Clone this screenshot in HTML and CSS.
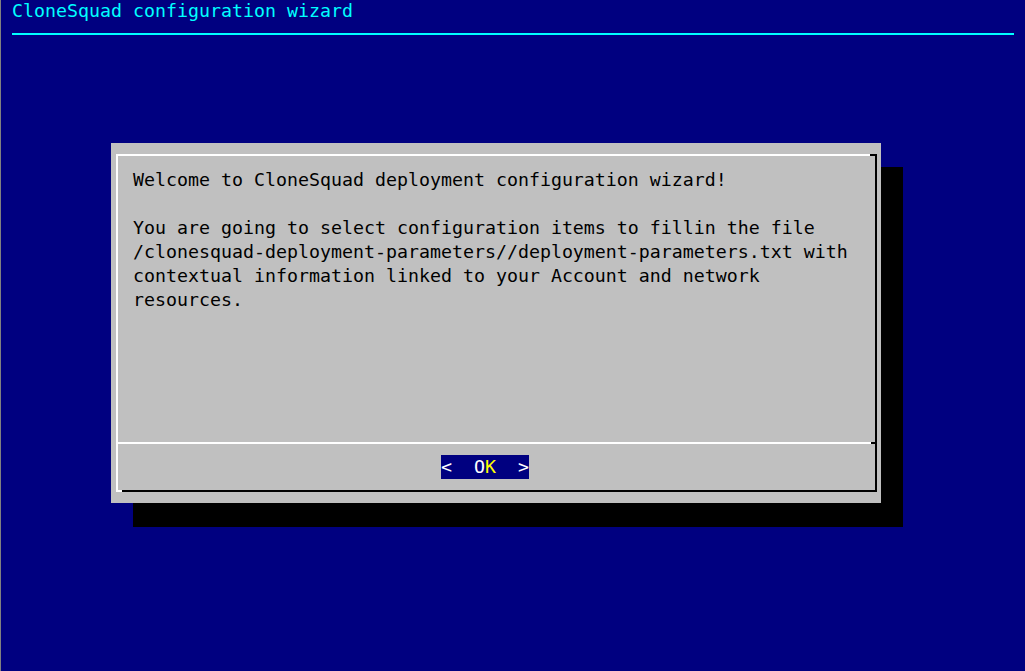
FILE: index.html
```html
<!DOCTYPE html>
<html lang="en">
<head>
<meta charset="utf-8">
<title>CloneSquad configuration wizard</title>
<link rel="stylesheet" href="styles.css">
</head>
<body>
<div class="screen">
  <header class="backtitle">CloneSquad configuration wizard</header>
  <div class="rule"></div>
  <section class="dialog">
    <div class="frame">
      <div class="message">Welcome to CloneSquad deployment configuration wizard!

You are going to select configuration items to fillin the file
/clonesquad-deployment-parameters//deployment-parameters.txt with
contextual information linked to your Account and network
resources.</div>
      <div class="buttons">
        <span class="btn">&lt;  O<span class="hot">K</span>  &gt;</span>
      </div>
    </div>
  </section>
</div>
</body>
</html>
```
FILE: styles.css
```css
html, body {
  margin: 0;
  padding: 0;
  background: #000080;
}

.screen {
  width: 1024px;
  height: 671px;
  background: #000080;
  border-left: 1px solid #808080;
  overflow: hidden;
  font-family: "DejaVu Sans Mono", "Liberation Mono", monospace;
  font-size: 18.27px;
  line-height: 24px;
}

.backtitle {
  margin-top: -1px;
  padding-left: 11px;
  height: 24px;
  color: #00ffff;
  white-space: pre;
}

.rule {
  margin: 10px 11px 0 11px;
  height: 2px;
  background: #00ffff;
}

.dialog {
  box-sizing: border-box;
  margin-top: 108px;
  margin-left: 110px;
  width: 770px;
  height: 360px;
  padding: 11px 4px 11px 5px;
  background: #c0c0c0;
  box-shadow: 22px 24px 0 #000000;
  color: #000000;
}

.frame {
  position: relative;
  height: 338px;
  box-sizing: border-box;
  border-top: 2px solid #ffffff;
  border-left: 2px solid #ffffff;
  border-right: 2px solid #000000;
  border-bottom: 2px solid #000000;
  display: flex;
  flex-direction: column;
}

.frame::before {
  content: "";
  position: absolute;
  top: -2px;
  right: -2px;
  width: 7px;
  height: 2px;
  background: #000000;
}

.frame::after {
  content: "";
  position: absolute;
  bottom: -2px;
  left: -2px;
  width: 6px;
  height: 2px;
  background: #ffffff;
}

.message {
  height: 286px;
  box-sizing: border-box;
  padding: 12px 0 0 15px;
  white-space: pre;
}

.buttons {
  position: relative;
  border-top: 2px solid #ffffff;
  height: 46px;
  box-sizing: border-box;
  padding: 11px 0 0 323px;
}

.buttons::after {
  content: "";
  position: absolute;
  top: -2px;
  right: 0;
  width: 4px;
  height: 2px;
  background: #000000;
}

.btn {
  display: inline-block;
  width: 88px;
  height: 24px;
  background: #000080;
  color: #ffffff;
  white-space: pre;
  vertical-align: top;
}

.hot {
  color: #ffff00;
}
```
